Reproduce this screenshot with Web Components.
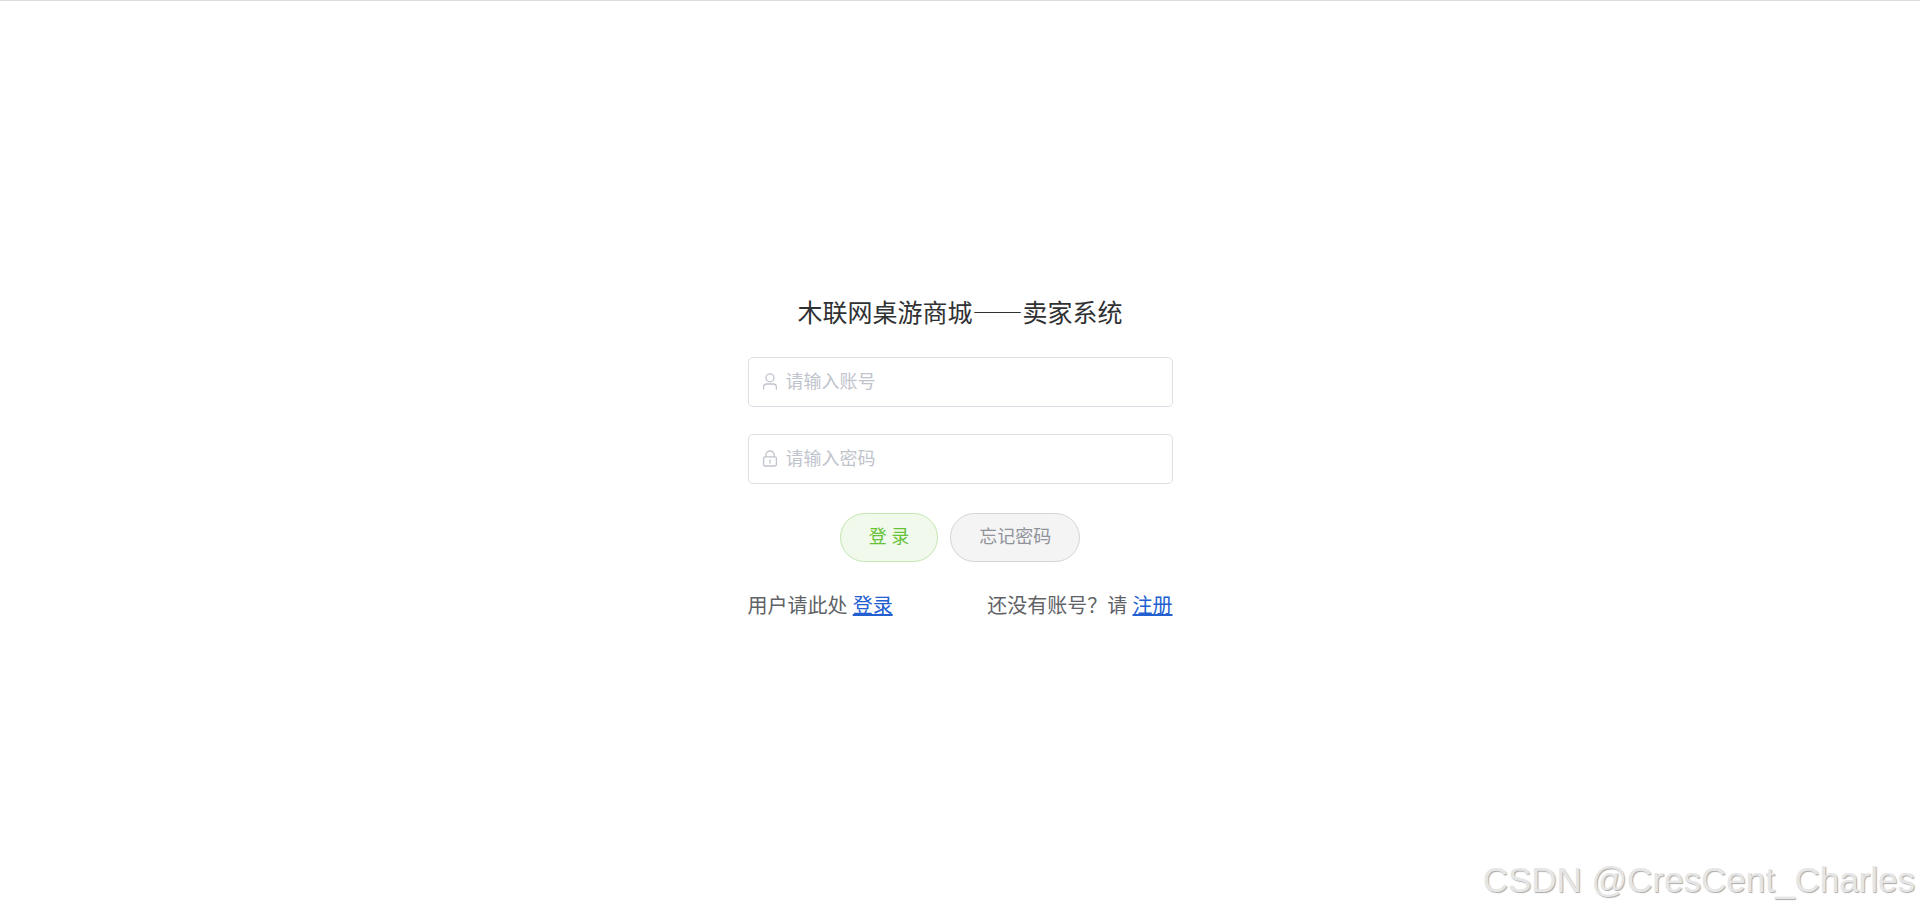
<!DOCTYPE html>
<html lang="zh-CN">
<head>
<meta charset="utf-8">
<title>木联网桌游商城——卖家系统</title>
<style>
  body {
    margin: 0;
    background: #fff;
    color: #303133;
    font-family: "Noto Sans", "Noto Sans CJK SC", sans-serif;
    font-weight: 400;
  }
</style>
</head>
<body>
<seller-login-page></seller-login-page>
<script>
  const define = (name, html, setup) => {
    const template = document.createElement('template');
    template.innerHTML = html;
    customElements.define(name, class extends HTMLElement {
      constructor() {
        super();
        this.attachShadow({ mode: 'open' }).append(template.content.cloneNode(true));
      }
      connectedCallback() { if (setup) setup(this, this.shadowRoot); }
    });
  };

  define('icon-field', `
    <style>
      :host { display: block; }
      label {
        display: flex; align-items: center; gap: 8px;
        box-sizing: border-box; height: 50px; padding: 0 13px 2px;
        border: 1px solid #dcdfe6; border-radius: 5px; background: #fff;
        color: #c0c4cc; cursor: text;
      }
      label:focus-within { border-color: #409eff; }
      ::slotted(svg) { flex: none; width: 16px; height: 18px; }
      input {
        flex: 1; min-width: 0; padding: 0; border: 0; outline: 0;
        background: none; color: #606266;
        font: inherit; font-size: 18px; line-height: 24px;
      }
      input::placeholder { color: #c0c4cc; opacity: 1; }
    </style>
    <label><slot></slot><input></label>`,
    (host, root) => {
      const input = root.querySelector('input');
      input.type = host.getAttribute('type') || 'text';
      input.placeholder = host.getAttribute('placeholder');
      input.setAttribute('aria-label', input.placeholder);
    });

  define('pill-button', `
    <style>
      :host { display: block; --ink: #909399; --fill: #f4f4f5; --line: #d3d4d6; }
      :host([kind="success"]) { --ink: #67c23a; --fill: #f0f9eb; --line: #c2e7b0; }
      button {
        display: block; height: 49px; padding: 0 28px 2px;
        border: 1px solid var(--line); border-radius: 25px;
        background: var(--fill); color: var(--ink);
        font: inherit; font-size: 18px; line-height: 24px; cursor: pointer;
      }
    </style>
    <button type="button"><slot></slot></button>`);

  define('text-prompt', `
    <style>
      :host { display: block; color: #606266; font-size: 20px; line-height: 26px; white-space: nowrap; }
      a { color: #2260d2; text-decoration: underline; }
    </style>
    <slot></slot> <a href="#"></a>`,
    (host, root) => { root.querySelector('a').textContent = host.getAttribute('link'); });

  define('page-watermark', `
    <style>
      :host {
        position: absolute; right: 5px; bottom: 9px;
        color: #e6e6e6; font: 400 35px/46px "Liberation Sans", Arial, sans-serif;
        text-shadow: 1px 1px 1px #aaa; white-space: nowrap; pointer-events: none;
      }
    </style>
    <slot></slot>`);

  define('seller-login-page', `
    <style>
      :host {
        display: grid; place-items: center; position: relative;
        box-sizing: border-box; min-height: 100vh; border-top: 1px solid #dcdcdc;
      }
      main { width: 425px; max-width: 100%; }
      h1 {
        margin: 0 0 29px; text-align: center;
        font: 400 25px/33px "Noto Sans CJK SC", sans-serif;
      }
      form { display: grid; gap: 27px; }
      .actions { display: flex; justify-content: center; gap: 12px; padding: 2px 0 4px; }
      .links { display: flex; justify-content: space-between; }
      svg { fill: none; stroke: currentColor; stroke-width: 1.3; stroke-linecap: round; }
    </style>
    <main>
      <h1>木联网桌游商城——卖家系统</h1>
      <form>
        <icon-field placeholder="请输入账号">
          <svg viewBox="0 0 16 18" aria-hidden="true">
            <circle cx="8" cy="5.8" r="4"/>
            <path d="M1.6 17v-1.8c0-2 1.2-3.2 3.2-3.2h6.4c2 0 3.2 1.2 3.2 3.2V17"/>
          </svg>
        </icon-field>
        <icon-field type="password" placeholder="请输入密码">
          <svg viewBox="0 0 16 18" aria-hidden="true">
            <rect x="1.6" y="7.8" width="12.8" height="9.2" rx="1.4"/>
            <path d="M3.8 7.6V6.2a4.2 4.2 0 0 1 8.4 0v1.4M8 11v3"/>
          </svg>
        </icon-field>
        <div class="actions">
          <pill-button kind="success">登 录</pill-button>
          <pill-button>忘记密码</pill-button>
        </div>
        <div class="links">
          <text-prompt link="登录">用户请此处</text-prompt>
          <text-prompt link="注册">还没有账号？请</text-prompt>
        </div>
      </form>
    </main>
    <page-watermark>CSDN @CresCent_Charles</page-watermark>`);
</script>
</body>
</html>
